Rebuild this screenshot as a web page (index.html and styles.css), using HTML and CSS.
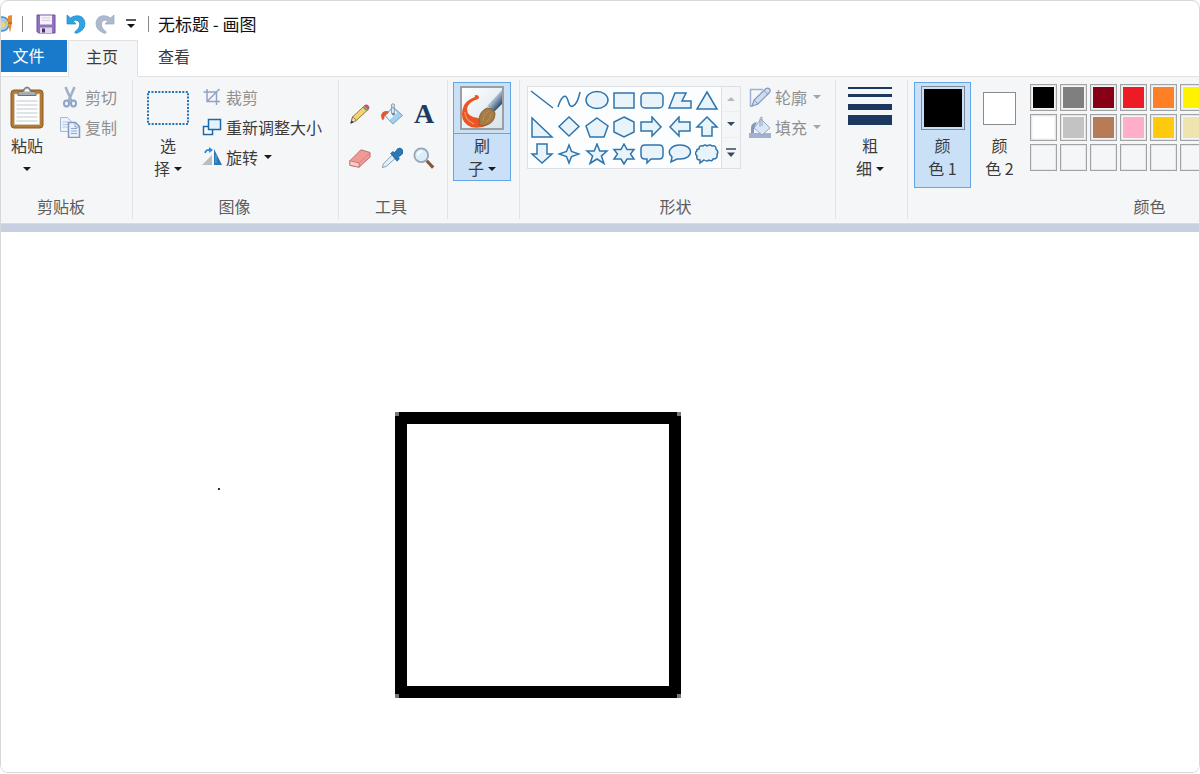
FILE: index.html
```html
<!DOCTYPE html>
<html lang="zh-CN">
<head>
<meta charset="utf-8">
<title>无标题 - 画图</title>
<link rel="stylesheet" href="styles.css">
</head>
<body>
<div class="window">
  <header class="titlebar">
    <svg class="app-icon" viewBox="0 0 12 20"><circle cx="1" cy="10" r="7" fill="#9fd0ee" stroke="#4a90c4" stroke-width="1.5"/><circle cx="1" cy="11" r="3" fill="#f3d27a"/><circle cx="5" cy="8" r="1.5" fill="#f7b53a"/><path d="M7 2l4-1v8l-2 10-2-9z" fill="#ee8a2c"/><path d="M7 9h4" stroke="#8b5a2b"/></svg>
    <span class="divider"></span>
    <button class="quick save" aria-label="保存"><svg width="20" height="20" viewBox="0 0 20 20"><path d="M1 1h18v18H2.500l-1.500-1.500z" fill="#9272bd" stroke="#6f4d9f"/><path d="M4 1.500h12v9H4z" fill="#f6f3fa"/><path d="M5.500 4h9M5.500 6.500h9" stroke="#d4cede"/><path d="M4 13.500h12v5.500H4z" fill="#ddd9e6"/><path d="M6 14.500h3v4H6z" fill="#4a3474"/></svg></button>
    <button class="quick" aria-label="撤消"><svg width="20" height="20" viewBox="0 0 20 20"><path d="M1 1v9h9L7 6.800q5-2 6.500 2.200 1 5-5 9l1.500 1.500q9-3 9-10C18.500 1 10 0 4.500 4z" fill="#2fa3e3" stroke="#1e86c8" stroke-width=".7"/></svg></button>
    <button class="quick" aria-label="重做"><svg width="20" height="20" viewBox="0 0 20 20"><path d="M19 1v9h-9l3-3.200q-5-2-6.500 2.200-1 5 5 9L10 19.500q-9-3-9-10C1.500 1 10 0 15.500 4z" fill="#adbacd" stroke="#96a6be" stroke-width=".7"/></svg></button>
    <button class="quick more" aria-label="自定义快速访问工具栏"><svg width="10" height="10" viewBox="0 0 10 10"><path d="M0 1h10" stroke="#222" stroke-width="1.500"/><path d="M1 5h8L5 9z" fill="#111"/></svg></button>
    <span class="divider"></span>
    <h1 class="title">无标题 - 画图</h1>
  </header>

  <nav class="tabs">
    <button class="tab file">文件</button>
    <button class="tab active">主页</button>
    <button class="tab">查看</button>
  </nav>

  <div class="ribbon">
    <section class="group clipboard">
      <div class="tools">
        <button class="big paste">
          <span class="pic"><svg width="34" height="44" viewBox="0 0 34 44"><rect x="1" y="4" width="32" height="38" rx="3" fill="#b27a35" stroke="#8c5a22"/><path d="M4.500 8h25v30.500h-25z" fill="#fdfdfd" stroke="#d6cbb8"/><path d="M6.500 15h21M6.500 19h21M6.500 23h21M6.500 27h21M6.500 31h21M6.500 35h21" stroke="#bccbd6"/><path d="M8 9.500V7q0-1.500 2-1.500h3Q14 1 17 1t4 4.500h3q2 0 2 1.500v2.500z" fill="#a9adb1" stroke="#6c7075"/><path d="M14.500 5.500Q15 3 17 3t2.500 2.500z" fill="#fff"/></svg></span>
          <span class="line">粘贴</span><span class="line"><i class="caret"></i></span>
        </button>
        <div class="rows">
          <button class="small" disabled><svg class="ic" viewBox="0 0 22 22"><path d="M6.500 1l6 14M15.500 1l-6 14" stroke="#9fb0ca" stroke-width="2.500" fill="none"/><ellipse cx="7.500" cy="17.500" rx="2.500" ry="3" fill="none" stroke="#8fa3c4" stroke-width="2"/><ellipse cx="14.500" cy="17.500" rx="2.500" ry="3" fill="none" stroke="#8fa3c4" stroke-width="2"/></svg>剪切</button>
          <button class="small" disabled><svg class="ic" viewBox="0 0 22 22"><path d="M1.500 1.500h7l4 4v10h-11z" fill="#edf3fa" stroke="#a5b8d3"/><path d="M3.500 6h6M3.500 8.500h6M3.500 11h6" stroke="#b9c8dd"/><path d="M9.500 6.500h7l4 4v11h-11z" fill="#eaf1fa" stroke="#8099c0" stroke-width="1.500"/><path d="M16 7v4h4M12 12.500h6M12 15h6M12 17.500h6" stroke="#8ea5c8" fill="none"/></svg>复制</button>
        </div>
      </div>
      <h2 class="caption">剪贴板</h2>
    </section>

    <section class="group image">
      <div class="tools">
        <button class="big">
          <span class="pic"><svg width="42" height="34" viewBox="0 0 42 34"><rect x="1" y="1" width="40" height="32" fill="none" stroke="#2273b5" stroke-width="2" stroke-dasharray="2 1.430"/></svg></span>
          <span class="line">选</span><span class="line">择<i class="caret"></i></span>
        </button>
        <div class="rows">
          <button class="small" disabled><svg class="ic" viewBox="0 0 20 20"><path d="M5 2v12.500h13M1.500 5h13v13M6 13.500L17.500 2" fill="none" stroke="#90a3c2" stroke-width="1.500"/></svg>裁剪</button>
          <button class="small"><svg class="ic" viewBox="0 0 20 20"><path d="M1.500 9.500h9v8h-9z" fill="#fff" stroke="#1f69aa" stroke-width="1.500"/><path d="M6.500 2.500h12v10h-12z" fill="#e6f2fb" stroke="#1f69aa" stroke-width="1.500"/></svg>重新调整大小</button>
          <button class="small"><svg class="ic" viewBox="0 0 20 20"><path d="M10 8v10H0z" fill="#b9bcc0"/><path d="M12 2v16h8z" fill="#2c78b4"/><path d="M14 8v8" stroke="#65a6d6"/><path d="M3 6Q4 2.500 8 3" stroke="#2f86e0" stroke-width="1.700" fill="none"/><path d="M7 0l4 3-4 3z" fill="#2f86e0"/></svg>旋转<i class="caret"></i></button>
        </div>
      </div>
      <h2 class="caption">图像</h2>
    </section>

    <section class="group kit">
      <div class="tools kit-grid">
        <button class="tool" aria-label="铅笔"><svg viewBox="0 0 24 24"><path d="M2 22l2-7L17 3l4 4L8 19z" fill="#f5d56b" stroke="#83704a"/><path d="M2 22l2-7 4 4z" fill="#f6e3c5" stroke="#6b5b40" stroke-width=".8"/><path d="M2 22l1-3 2 2z" fill="#222"/><path d="M15 5l4 4 1.500-1.500-4-4z" fill="#6f9b73"/><path d="M17 3q2-2 4 0t0 4z" fill="#d95670" stroke="#a84458" stroke-width=".7"/></svg></button>
        <button class="tool" aria-label="用颜色填充"><svg viewBox="0 0 24 24"><path d="M13 4l10.500 9.500L13 23 4.500 14z" fill="#a4cfee" stroke="#6f9cc2"/><path d="M12.500 6l5 4.500-8 8-4-4.500z" fill="#e9f6fd"/><path d="M8 9Q1 8 0 14l1 4q2 1 2.500-1 0-4 4.500-6z" fill="#e75427"/><path d="M11.500 12V3q0-3 3-1.500V12" stroke="#98a2ab" stroke-width="1.200" fill="none"/><circle cx="13.500" cy="12" r="1.500" fill="#68798a"/></svg></button>
        <button class="tool letter" aria-label="文本">A</button>
        <button class="tool" aria-label="橡皮擦"><svg viewBox="0 0 24 24"><path d="M1 15L13 3l10 3v5L11 22 1 20z" fill="#ef9a97" stroke="#b9686a"/><path d="M1 15l10 2.500V22L1 20z" fill="#f9cdc8" stroke="#b9686a" stroke-width=".8"/><path d="M11 17.500L23 6" stroke="#d77f7f"/></svg></button>
        <button class="tool" aria-label="颜色选取器"><svg viewBox="0 0 24 24"><path d="M1.500 22.500l1-4L13 8l3.500 3.500L6 21z" fill="#e2eff8" stroke="#7d97ad"/><path d="M10.500 7L13 5l2 1 3-4q3-2 5 .5t.5 5L19 11l1 2-2.500 2.500z" fill="#2b78b9" stroke="#1f5487" stroke-width=".7"/></svg></button>
        <button class="tool" aria-label="放大镜"><svg viewBox="0 0 24 24"><path d="M15 15l7 7.500" stroke="#84583c" stroke-width="3.500"/><circle cx="9" cy="9" r="7.500" fill="#d9edfc" stroke="#98a5b1" stroke-width="2"/><path d="M5 9q1-4 5-4" stroke="#fff" stroke-width="2" fill="none"/></svg></button>
      </div>
      <h2 class="caption">工具</h2>
    </section>

    <section class="group brush">
      <div class="tools">
        <button class="big split pressed">
          <span class="pic"><svg width="44" height="44" viewBox="0 0 44 44"><defs><linearGradient id="paper" x2="1" y2="1"><stop stop-color="#fff"/><stop offset="1" stop-color="#d5e3e9"/></linearGradient><linearGradient id="handle" x1=".2" y1=".2" x2=".7" y2=".8"><stop stop-color="#f0f5f9"/><stop offset=".5" stop-color="#a3b4c6"/><stop offset="1" stop-color="#3b5679"/></linearGradient></defs><rect x="1" y="1" width="42" height="42" fill="url(#paper)" stroke="#9c9fa2" stroke-width="2"/><path d="M42 4L27 20l7 6 8-8z" fill="url(#handle)"/><path d="M18 13Q8 16 7 23q0 8 11 9l10 7q-8 4-17 2Q2 37 2 29 2 15 15 11q-1-2 1-2 3 0 3 3z" fill="#ea5526"/><path d="M5 26q0 8 9 12" stroke="#f58a5c" stroke-width="1.500" fill="none"/><path d="M19 33q1-8 8-11l5 1 3 4q0 8-6 11-6 3-10 1 1-2 0-6z" fill="#a57a45" stroke="#8a6236"/><path d="M23 35q0-7 6-10M26 36q5-3 5-9" stroke="#c09562" stroke-width=".8" fill="none"/></svg></span>
          <span class="line">刷</span><span class="line">子<i class="caret"></i></span>
        </button>
      </div>
    </section>

    <section class="group shapes">
      <div class="tools">
        <div class="gallery">
          <div class="shape-grid">
            <button class="shape" aria-label="直线"><svg viewBox="0 0 24 22"><path d="M1 2l22 17"/></svg></button>
            <button class="shape" aria-label="曲线"><svg viewBox="0 0 24 22"><path class="open" d="M1 18C4 8 8 5 10 9s2 10 6 8 6-9 7-14"/></svg></button>
            <button class="shape" aria-label="椭圆形"><svg viewBox="0 0 24 22"><ellipse cx="12" cy="11" rx="11" ry="8.500"/></svg></button>
            <button class="shape" aria-label="矩形"><svg viewBox="0 0 24 22"><path d="M2 4h20v15H2z"/></svg></button>
            <button class="shape" aria-label="圆角矩形"><svg viewBox="0 0 24 22"><rect x="1" y="4" width="22" height="15" rx="4"/></svg></button>
            <button class="shape" aria-label="多边形"><svg viewBox="0 0 24 22"><path d="M7 4h11l-4 8h9v7H1z"/></svg></button>
            <button class="shape" aria-label="三角形"><svg viewBox="0 0 24 22"><path d="M12 3l10 17H2z"/></svg></button>
            <button class="shape" aria-label="直角三角形"><svg viewBox="0 0 24 22"><path d="M2 2v19h20z"/></svg></button>
            <button class="shape" aria-label="菱形"><svg viewBox="0 0 24 22"><path d="M12 1l10 9.500L12 20 2 10.500z"/></svg></button>
            <button class="shape" aria-label="五边形"><svg viewBox="0 0 24 22"><path d="M12 2l11 8-4 11H5L1 10z"/></svg></button>
            <button class="shape" aria-label="六边形"><svg viewBox="0 0 24 22"><path d="M12 1l10 5v10l-10 5-10-5V6z"/></svg></button>
            <button class="shape" aria-label="右箭头"><svg viewBox="0 0 24 22"><path d="M1 6h11V1l9 10-9 9v-5H1z"/></svg></button>
            <button class="shape" aria-label="左箭头"><svg viewBox="0 0 24 22"><path d="M22 6H11V1L2 11l9 9v-5h11z"/></svg></button>
            <button class="shape" aria-label="上箭头"><svg viewBox="0 0 24 22"><path d="M12 1L2 11h5v9h10v-9h5z"/></svg></button>
            <button class="shape" aria-label="下箭头"><svg viewBox="0 0 24 22"><path d="M12 20L2 11h5V1h10v10h5z"/></svg></button>
            <button class="shape" aria-label="四角星"><svg viewBox="0 0 24 22"><path d="M12 2l2.500 6.500L22 11l-7.500 2.500L12 20l-2.500-6.500L2 11l7.500-2.500z"/></svg></button>
            <button class="shape" aria-label="五角星"><svg viewBox="0 0 24 22"><path d="M12 1l2.800 7H22l-5.600 5L19 20.500 12 16l-7 4.500L7.600 13 2 8h7.200z"/></svg></button>
            <button class="shape" aria-label="六角星"><svg viewBox="0 0 24 22"><path d="M12 1l3 5.500h7L18.500 11l3.500 5h-7l-3 5-3-5H2l3.500-5L2 6.500h7z"/></svg></button>
            <button class="shape" aria-label="圆角矩形标注"><svg viewBox="0 0 24 22"><path d="M5 2h14q4 0 4 4v6q0 4-4 4h-8l-4 4v-4H5q-4 0-4-4V6q0-4 4-4z"/></svg></button>
            <button class="shape" aria-label="椭圆形标注"><svg viewBox="0 0 24 22"><path d="M12 2c14 0 14 14 0 14H9l-6 3 1-5C-2 9 3 2 12 2z"/></svg></button>
            <button class="shape" aria-label="云形标注"><svg viewBox="0 0 24 22"><path d="M4 6q0-4 4-3 2-2 4 0 3-2 5 0 4-1 4 3 3 3 1 5 1 5-4 5-1 3-4 1-2 2-5 0l-4 3v-3q-4 0-3-4-3-3 0-5-1-2 2-2z"/></svg></button>
          </div>
          <div class="scroller">
            <button class="step faded" aria-label="上一行"><i class="caret up"></i></button>
            <button class="step" aria-label="下一行"><i class="caret"></i></button>
            <button class="step" aria-label="更多形状"><svg width="10" height="10" viewBox="0 0 10 10"><path d="M0 1h10" stroke="#39495f" stroke-width="1.500"/><path d="M1 4.500h8L5 9z" fill="#39495f"/></svg></button>
          </div>
        </div>
        <div class="rows">
          <button class="small" disabled><svg class="ic" viewBox="0 0 22 22"><path d="M14 3.500H1.500v16.500h2" fill="none" stroke="#9fb1cc" stroke-width="1.500"/><path d="M3 20l2-6L17 2.500q2-1 3.500.5t0 3.500L9 18z" fill="#cddcf0" stroke="#8299bd" stroke-width="1.200"/><path d="M15 4.500l3.500 3.500M5 14l4 4" stroke="#8299bd"/></svg>轮廓<i class="caret"></i></button>
          <button class="small" disabled><svg class="ic" viewBox="0 0 22 22"><path d="M0 17h22v5H0z" fill="#a0b2ce"/><path d="M12 3l9 9-8 7-8-7z" fill="#dbe6f4" stroke="#91a5c4"/><path d="M11 11V3q0-2 2-2v9" fill="none" stroke="#91a5c4"/><path d="M8 6Q2 7 2 12v5h3v-5z" fill="#8398ba"/></svg>填充<i class="caret"></i></button>
        </div>
      </div>
      <h2 class="caption">形状</h2>
    </section>

    <section class="group weight">
      <div class="tools">
        <button class="big">
          <span class="pic"><svg width="44" height="42" viewBox="0 0 44 42"><path d="M0 0h44v2H0zM0 7h44v3H0zM0 17h44v6H0zM0 28h44v10H0z" fill="#1d385f"/></svg></span>
          <span class="line">粗</span><span class="line">细<i class="caret"></i></span>
        </button>
      </div>
    </section>

    <section class="group colors">
      <div class="tools">
        <button class="big pressed tall">
          <span class="pic"><span class="ink primary"></span></span>
          <span class="line">颜</span><span class="line">色 1</span>
        </button>
        <button class="big tall">
          <span class="pic"><span class="ink"></span></span>
          <span class="line">颜</span><span class="line">色 2</span>
        </button>
        <div class="palette">
          <button class="swatch black" aria-label="黑色"></button><button class="swatch gray" aria-label="灰色-50%"></button><button class="swatch maroon" aria-label="深红色"></button><button class="swatch red" aria-label="红色"></button><button class="swatch orange" aria-label="橙色"></button><button class="swatch yellow" aria-label="黄色"></button>
          <button class="swatch white" aria-label="白色"></button><button class="swatch silver" aria-label="灰色-25%"></button><button class="swatch brown" aria-label="褐色"></button><button class="swatch pink" aria-label="玫瑰色"></button><button class="swatch gold" aria-label="金色"></button><button class="swatch cream" aria-label="浅黄色"></button>
          <button class="swatch" aria-label="自定义"></button><button class="swatch" aria-label="自定义"></button><button class="swatch" aria-label="自定义"></button><button class="swatch" aria-label="自定义"></button><button class="swatch" aria-label="自定义"></button><button class="swatch" aria-label="自定义"></button>
        </div>
      </div>
      <h2 class="caption">颜色</h2>
    </section>
  </div>

  <main class="canvas">
    <div class="dot"></div>
    <div class="square"></div>
  </main>
</div>
</body>
</html>
```

FILE: styles.css
```css
* { box-sizing: border-box; }

body {
  margin: 0;
  background: #fff;
  color: #3c3c3c;
  font: 16px/23px "Noto Sans CJK SC", "Liberation Sans", sans-serif;
}

button {
  margin: 0;
  padding: 0;
  border: 0;
  background: none;
  color: inherit;
  font: inherit;
}

svg { display: block; flex: none; }

.window {
  display: flex;
  flex-direction: column;
  height: calc(100vh - 1px);
  border: 1px solid #d6d7d8;
  border-radius: 8px;
  overflow: hidden;
}

/* Title bar */
.titlebar {
  display: flex;
  align-items: center;
  flex: none;
  height: 39px;
  padding-top: 7px;
}
.app-icon { width: 12px; height: 20px; }
.divider { width: 1px; height: 16px; margin: 0 9px; background: #8a8a8a; }
.quick { margin-right: 9px; }
.save { margin-left: 4px; margin-right: 10px; }
.more { margin: 0 3px 0 2px; }
.title { margin: 0; padding-bottom: 2px; color: #111; font-size: 17px; font-weight: 400; }

/* Tabs */
.tabs { display: flex; align-items: flex-start; flex: none; height: 36px; }
.tab { width: 72px; height: 33px; }
.tab.file { width: 66px; height: 32px; margin-right: 1px; padding: 0 11px 2px 0; background: #1979ca; color: #fff; }
.tab.active {
  position: relative;
  width: 70px;
  height: 37px;
  padding: 0 2px 5px 0;
  border: 1px solid #dfe1e4;
  border-bottom: 0;
  background: #f5f6f8;
}

/* Ribbon */
.ribbon {
  display: flex;
  flex: none;
  border-top: 1px solid #dfe1e4;
  border-bottom: 1px solid #dadbdc;
  background: #f5f6f8;
}
.group {
  display: flex;
  flex-direction: column;
  flex: none;
  margin: 3px 0 4px;
  padding: 2px 5px 0;
  border-right: 1px solid #e1e3e6;
}
.tools { display: flex; align-items: flex-start; height: 112px; }
.caption {
  margin: 0;
  color: #5c5c5c;
  font-size: 16px;
  font-weight: 400;
  line-height: 25px;
  text-align: center;
}
.clipboard { width: 132px; padding-left: 0; }
.clipboard .caption { padding-right: 6px; }
.image { width: 206px; padding-left: 6px; }
.image .caption { padding-right: 3px; }
.kit { width: 109px; }
.kit .caption { padding-right: 4px; }
.brush { width: 72px; }
.shapes { width: 316px; }
.shapes .caption { padding-right: 4px; }
.weight { width: 72px; }
.colors { width: 482px; padding-left: 6px; border-right: 0; }

/* Large buttons with a picture over two lines of text */
.big {
  display: flex;
  flex-direction: column;
  align-items: center;
  width: 58px;
  border: 1px solid transparent;
}
.pic {
  display: flex;
  align-items: center;
  justify-content: center;
  align-self: stretch;
  height: 51px;
  border-bottom: 1px solid transparent;
}
.line { display: flex; align-items: center; justify-content: center; gap: 4px; height: 23px; }
.big.pressed { border-color: #64a5e7; background: #c9e0f7; }
.big.split .pic { border-color: #64a5e7; }
.big.tall { width: 57px; padding-bottom: 7px; }
.paste { width: 52px; }

.caret {
  flex: none;
  border: 4px solid transparent;
  border-top-color: #1a1a1a;
  border-bottom: 0;
}
.caret.up { border-top: 0; border-bottom: 4px solid #1a1a1a; }

/* Small buttons with an icon beside the text */
.rows { display: flex; flex-direction: column; align-items: flex-start; }
.small { display: flex; align-items: center; gap: 4px; height: 30px; white-space: nowrap; }
.small:disabled { color: #8f8f8f; }
.small:disabled .caret { border-top-color: #a5a5a5; }
.small .caret { margin-left: 2px; }
.ic { width: 22px; height: 22px; }
.clipboard .rows { padding-left: 6px; }
.image .rows { padding-left: 5px; }
.image .ic { width: 20px; height: 20px; }
.shapes .rows { padding-left: 8px; }

/* Drawing tools */
.kit-grid {
  display: grid;
  grid-template-columns: repeat(3, 32px);
  grid-template-rows: 44px 44px;
  align-content: end;
  padding-bottom: 14px;
}
.tool { display: flex; align-items: center; justify-content: center; align-self: center; }
.tool svg { width: 22px; height: 22px; }
.letter { color: #20395f; font: bold 28px/28px "Liberation Serif", serif; }

/* Shape gallery */
.gallery {
  display: flex;
  margin: 4px 0 0 2px;
  border: 1px solid #dcdfe3;
  background: #fbfdfe;
}
.shape-grid {
  display: grid;
  grid-template-columns: repeat(7, 27px);
  grid-auto-rows: 27px;
  justify-content: space-between;
  width: 193px;
}
.shape { display: flex; align-items: flex-start; justify-content: center; padding-top: 2px; }
.shape svg {
  width: 24px;
  height: 22px;
  fill: #e8f4f9;
  stroke: #2e74ad;
  stroke-width: 1.5;
}
.shape .open { fill: none; }
.scroller { display: grid; width: 19px; border-left: 1px solid #dcdfe3; background: #f5f6f8; }
.step { display: flex; align-items: center; justify-content: center; }
.step + .step { border-top: 1px solid #eceef1; }
.step .caret { border-top-color: #39495f; }
.step.faded .caret { border-bottom-color: #b4bac3; }

/* Colours */
.ink { width: 33px; height: 33px; border: 1px solid #8b8b8b; background: #fff; }
.ink.primary {
  width: 44px;
  height: 44px;
  padding: 2px;
  border: 1px solid #7c8a99;
  background: #000 content-box;
}
.palette {
  display: grid;
  grid-template-columns: repeat(6, 27px);
  grid-auto-rows: 27px;
  gap: 3px;
  padding: 2px 0 0 2px;
}
.swatch { padding: 2px; border: 1px solid #a3a3a3; background-clip: content-box; box-shadow: inset 0 0 0 1px #e6e6e6; }
.black { background-color: #000; }
.gray { background-color: #7f7f7f; }
.maroon { background-color: #880015; }
.red { background-color: #ed1c24; }
.orange { background-color: #ff7f27; }
.yellow { background-color: #fff200; }
.white { background-color: #fff; }
.silver { background-color: #c3c3c3; }
.brown { background-color: #b97a57; }
.pink { background-color: #ffaec9; }
.gold { background-color: #ffc90e; }
.cream { background-color: #efe4b0; }

/* Drawing area */
.canvas {
  position: relative;
  flex: 1;
  border-top: 8px solid #c7d0e1;
  background: #fff;
}
.dot { position: absolute; left: 217px; top: 256px; width: 2px; height: 2px; background: #333; }
.square {
  position: absolute;
  left: 394px;
  top: 180px;
  width: 286px;
  height: 286px;
  border: 12px solid #000;
}
.square::before,
.square::after {
  content: "";
  position: absolute;
  left: -12px;
  right: -12px;
  height: 4px;
  border: solid #777;
  border-width: 0 4px;
}
.square::before { top: -12px; }
.square::after { bottom: -12px; }
```
